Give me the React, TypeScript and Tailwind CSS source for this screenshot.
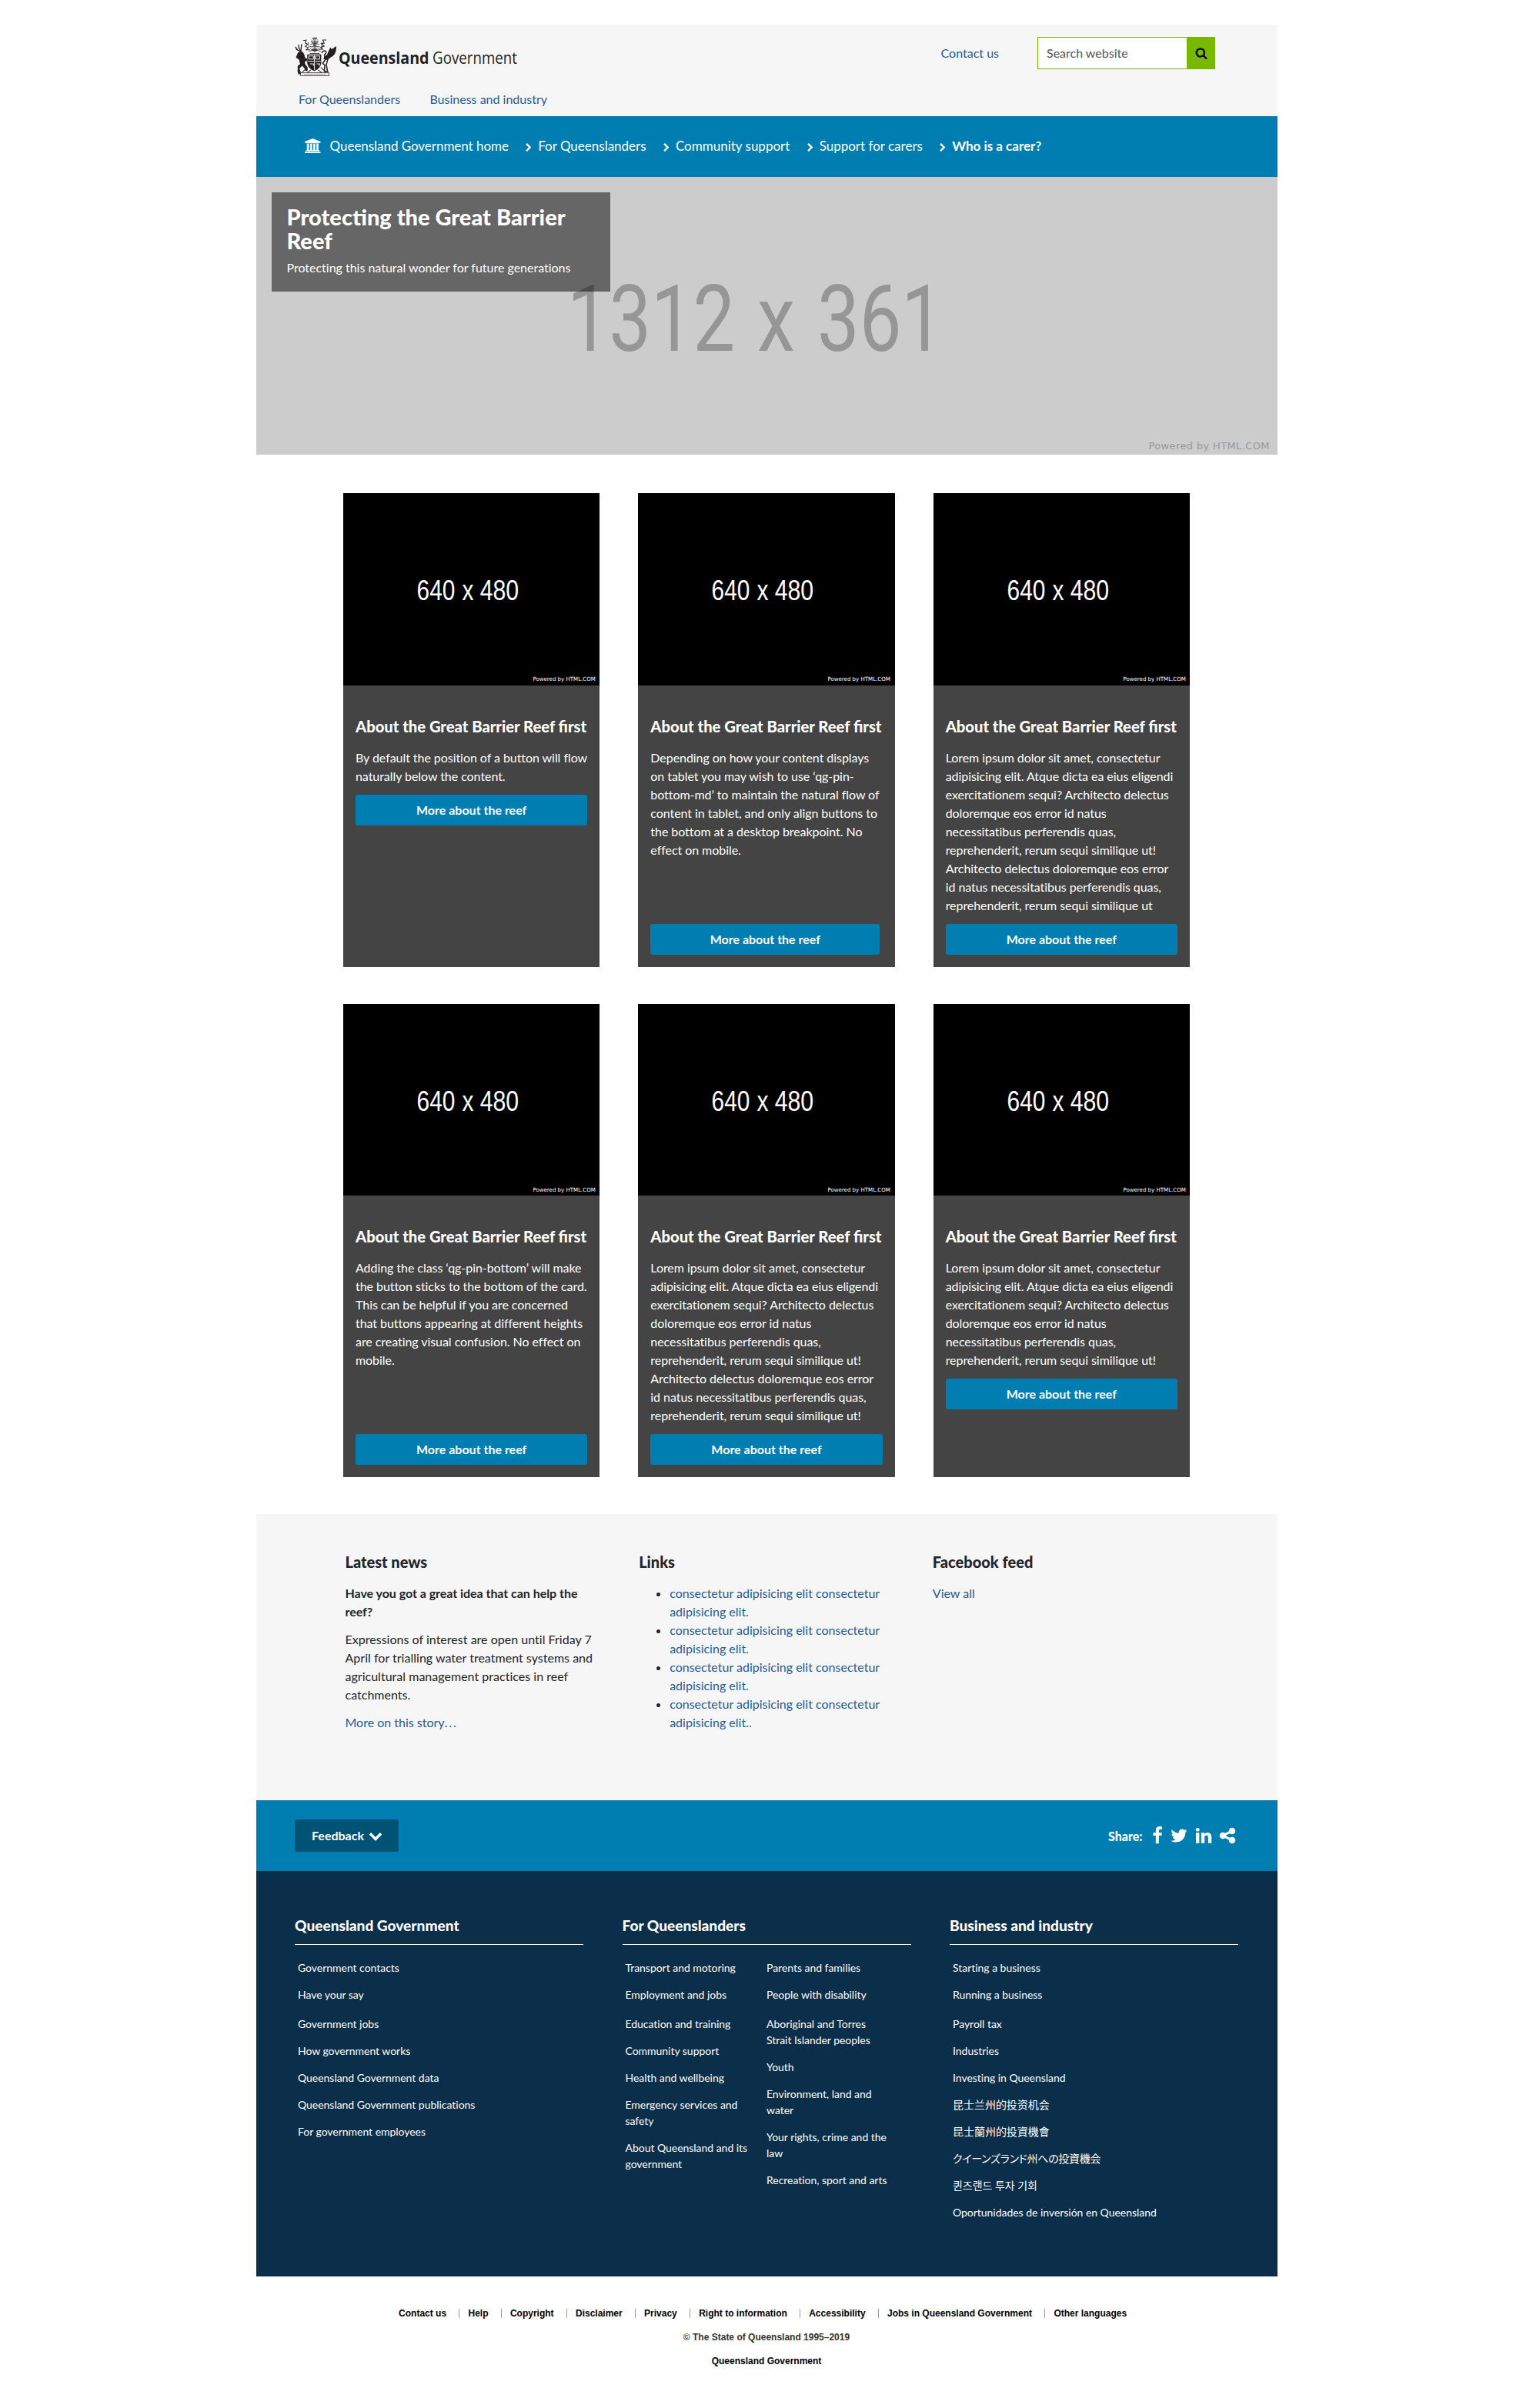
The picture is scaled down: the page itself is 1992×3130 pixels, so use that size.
import React from "react";

const LATO = "font-['Lato','Noto_Sans_CJK_SC',sans-serif]";

/* ---------- icons ---------- */

type IconProps = { className?: string; box?: string; d: string };

function Icon({ className = "", box = "0 0 1792 1792", d }: IconProps) {
  return (
    <svg viewBox={box} className={`shrink-0 ${className}`} fill="currentColor" aria-hidden="true">
      <path d={d} />
    </svg>
  );
}

const BANK =
  "M960 0l960 384v128h-128q0 26-20.5 45t-48.5 19h-1526q-28 0-48.5-19t-20.5-45h-128v-128zm-704 640h256v768h128v-768h256v768h128v-768h256v768h128v-768h256v768h59q28 0 48.5 19t20.5 45v64h-1664v-64q0-26 20.5-45t48.5-19h59v-768zm1595 960q28 0 48.5 19t20.5 45v128h-1920v-128q0-26 20.5-45t48.5-19h1782z";
const SEARCH =
  "M1216 832q0-185-131.5-316.5t-316.5-131.5-316.5 131.5-131.5 316.5 131.5 316.5 316.5 131.5 316.5-131.5 131.5-316.5zm512 832q0 52-38 90t-90 38q-54 0-90-38l-343-342q-179 124-399 124-143 0-273.5-55.5t-225-150-150-225-55.5-273.5 55.5-273.5 150-225 225-150 273.5-55.5 273.5 55.5 225 150 150 225 55.5 273.5q0 220-124 399l343 343q37 37 37 90z";
const FACEBOOK =
  "M1343 12v264h-157q-86 0-116 36t-30 108v189h293l-39 296h-254v759h-306v-759h-255v-296h255v-218q0-186 104-288.5t277-102.5q147 0 228 12z";
const TWITTER =
  "M1684 408q-67 98-162 167 1 14 1 42 0 130-38 259.5t-115.5 248.5-184.5 210.5-258 146-323 54.5q-271 0-496-145 35 4 78 4 225 0 401-138-105-2-188-64.5t-114-159.5q33 5 61 5 43 0 85-11-112-23-185.5-111.5t-73.5-205.5v-4q68 38 146 41-66-44-105-115t-39-154q0-88 44-163 121 149 294.5 238.5t371.5 99.5q-8-38-8-74 0-134 94.5-228.5t228.5-94.5q140 0 236 102 109-21 205-78-37 115-142 178 93-10 186-50z";
const LINKEDIN =
  "M477 625v991h-330v-991h330zm21-306q1 73-50.5 122t-135.5 49h-2q-82 0-132-49t-50-122q0-74 51.5-122.5t134.5-48.5 133 48.5 51 122.5zm1166 729v568h-329v-530q0-105-40.5-164.5t-126.5-59.5q-63 0-105.5 34.5t-63.5 85.5q-11 30-11 81v553h-329q2-399 2-647t-1-296l-1-48h329v144h-2q20-32 41-56t56.5-52 87-43.5 114.5-15.5q171 0 275 113.5t104 332.5z";
const SHARE =
  "M1344 1024q133 0 226.5 93.5t93.5 226.5-93.5 226.5-226.5 93.5-226.5-93.5-93.5-226.5q0-12 2-34l-360-180q-92 86-218 86-133 0-226.5-93.5t-93.5-226.5 93.5-226.5 226.5-93.5q126 0 218 86l360-180q-2-22-2-34 0-133 93.5-226.5t226.5-93.5 226.5 93.5 93.5 226.5-93.5 226.5-226.5 93.5q-126 0-218-86l-360 180q2 22 2 34t-2 34l360 180q92-86 218-86z";
const CHEVRON_RIGHT =
  "M1363 877l-742 742q-19 19-45 19t-45-19l-166-166q-19-19-19-45t19-45l531-531-531-531q-19-19-19-45t19-45l166-166q19-19 45-19t45 19l742 742q19 19 19 45t-19 45z";
const CHEVRON_DOWN =
  "M1683 808l-742 741q-19 19-45 19t-45-19l-742-741q-19-19-19-45.5t19-45.5l166-165q19-19 45-19t45 19l531 531 531-531q19-19 45-19t45 19l166 165q19 19 19 45.5t-19 45.5z";

/* Coat of arms: stag and brolga holding a quartered shield under a helm. */
function Crest() {
  return (
    <svg viewBox="0 0 160 152" className="h-[51px] w-[54px] shrink-0" fill="none" stroke="#231f20" strokeWidth="3">
      {/* helm, mantling and wreath */}
      <path d="M32 14l12-2-4 12 10 4-10 8 12 6-8 8h14M122 12l-14 0 6 12-12 2 12 10-14 4 8 8h-16" strokeWidth="3" />
      <path d="M66 10c4-6 16-8 22 0M62 16l30 0M64 22h26M60 30c8-6 26-6 34 0M58 38h38M60 46c8 6 24 6 32 0M54 56c12-6 34-6 46 0M58 64h38" strokeWidth="2.5" />
      <path d="M52 20c-2 8 4 12 2 20M104 20c4 8-2 12 0 22M70 2l4 10M84 2l-4 10M77 0v60" strokeWidth="2" />
      <path d="M70 26h14v10h-14zM68 44h18v12h-18z" fill="#231f20" stroke="none" opacity=".6" />
      {/* stag */}
      <path d="M2 38l8 12 12 8M14 30l2 14 8 14M26 28l-3 28M4 46l8 6" strokeWidth="4" />
      <path
        d="M12 60l16-4 8 10 4 16 8 2-2 10-8 2 2 10 8 10 2 14-8 2-6-12-8-8-10 10 4 20-8 4-4-14 2-16 8-12-4-16-12-8z"
        fill="#231f20"
        stroke="none"
      />
      <path d="M14 110c-2 12 0 20 8 28M36 106l10 26" strokeWidth="5" />
      {/* brolga */}
      <path
        d="M160 36c1 12-1 24-7 32-6 8-14 10-20 16-6 4-14 8-22 2 0-6 4-12 10-14 8-6 6-12 10-18 2-6 5-8 6-14l6 8z"
        fill="#231f20"
        stroke="none"
      />
      <path d="M124 80c-10 0-12-8-6-14 5-5 4-12-4-12-6 0-8 4-10 8M128 86l-6 20 4 26M118 88l-10 14 8 8-2 22M112 134h18" strokeWidth="4.5" />
      {/* shield */}
      <path d="M48 68h54v30c0 18-14 28-27 34-13-6-27-16-27-34z" fill="#231f20" stroke="none" />
      <path d="M54 74h18v12h-18zM80 74h16v12h-16zM52 94h22M80 94h20M58 104h14v8M84 104h12l-2 8M76 70v58" stroke="#f6f6f6" strokeWidth="3" />
      <path d="M60 80h6M86 80h6" strokeWidth="5" />
      {/* compartment and motto scroll */}
      <path d="M50 118c-8 6-14 14-22 18M100 118c8 6 14 14 22 18M62 128l-14 10M90 128l14 10" strokeWidth="3" />
      <path d="M22 139h110v11h-110z" fill="#f6f6f6" strokeWidth="2.5" />
      <path d="M36 145h84" strokeDasharray="3 2.5" strokeWidth="3" opacity=".6" />
    </svg>
  );
}

function Wordmark() {
  return (
    <svg viewBox="0 0 240 38" className="h-[38px] w-[240px] shrink-0" fill="#231f20" fontFamily="'Open Sans','Noto Sans',sans-serif" fontSize="22">
      <text x="1" y="26" fontWeight="700" textLength="117.5" lengthAdjust="spacingAndGlyphs">Queensland</text>
      <text x="123" y="26" textLength="110" lengthAdjust="spacingAndGlyphs">Government</text>
    </svg>
  );
}

/* ---------- header ---------- */

function Header() {
  return (
    <header className="flex h-[119px] flex-col bg-[#f6f6f6]">
      <div className="flex h-[66px] items-start pt-4 pl-[50px] pr-[81px]">
        <Crest />
        <div className="ml-[2.5px] mt-[8.5px]">
          <Wordmark />
        </div>
        <a className="ml-auto mt-[9px] mr-[49.5px] text-[#1f5c98]">Contact us</a>
        <form className="flex h-[42px] w-[231px]">
          <div className="flex-1 border border-[#79b800] bg-white pt-[8px] pl-[11.5px] text-[#555]">Search website</div>
          <button type="button" className="flex w-9 items-center justify-center bg-[#79b800] text-black">
            <Icon d={SEARCH} className="size-4" />
          </button>
        </form>
      </div>
      <nav className="mt-[19px] flex gap-[38.3px] pl-[55.5px] text-[#1f5c98]">
        <a>For Queenslanders</a>
        <a>Business and industry</a>
      </nav>
    </header>
  );
}

function Breadcrumbs() {
  const crumbs = ["For Queenslanders", "Community support", "Support for carers"];
  return (
    <nav className="flex h-[79px] items-start bg-[#007eb1] pt-[26.5px] pl-[63.5px] text-[17px] leading-6 text-white">
      <Icon d={BANK} box="0 0 1920 1792" className="mt-[2px] h-[19.2px] w-[20.6px]" />
      <a className="ml-3 tracking-[-0.04px]">Queensland Government home</a>
      {crumbs.map((c) => (
        <span key={c} className="flex">
          <Icon d={CHEVRON_RIGHT} className="mt-[8px] ml-[20.3px] size-3" />
          <a className="ml-[6px]">{c}</a>
        </span>
      ))}
      <span className="flex">
        <Icon d={CHEVRON_RIGHT} className="mt-[8px] ml-[20.3px] size-3" />
        <b className="ml-[6px]">Who is a carer?</b>
      </span>
    </nav>
  );
}

function Hero() {
  return (
    <section className="relative h-[361px] bg-[#ccc]">
      <svg viewBox="0 0 1327 361" className="block h-[361px] w-[1327px]" fill="#969696">
        <g fontFamily="Roboto, sans-serif" fontSize="121">
          <text x="404" y="226" textLength="218" lengthAdjust="spacingAndGlyphs">1312</text>
          <text x="651" y="226" textLength="49" lengthAdjust="spacingAndGlyphs">x</text>
          <text x="729" y="226" textLength="164" lengthAdjust="spacingAndGlyphs">361</text>
        </g>
        <text x="1159.5" y="353.5" fontFamily="'DejaVu Sans', sans-serif" fontSize="13" fill="#999" textLength="157" lengthAdjust="spacing">
          Powered by HTML.COM
        </text>
      </svg>
      <div className="absolute top-5 left-5 h-[129px] w-[440px] bg-black/50 px-5 pt-4 text-white">
        <h1 className="text-[29px] leading-[31px] font-black">Protecting the Great Barrier Reef</h1>
        <p className="mt-2 tracking-[-0.01px]">Protecting this natural wonder for future generations</p>
      </div>
    </section>
  );
}

/* ---------- cards ---------- */

const LOREM =
  "Lorem ipsum dolor sit amet, consectetur adipisicing elit. Atque dicta ea eius eligendi exercitationem sequi? Architecto delectus doloremque eos error id natus necessitatibus perferendis quas, reprehenderit, rerum sequi similique ut!";
const LOREM_MORE =
  " Architecto delectus doloremque eos error id natus necessitatibus perferendis quas, reprehenderit, rerum sequi similique ut";

type CardData = { text: string; pin?: boolean; narrow?: boolean };

const CARDS: CardData[] = [
  { text: "By default the position of a button will flow naturally below the content." },
  {
    text: "Depending on how your content displays on tablet you may wish to use ‘qg-pin-bottom-md’ to maintain the natural flow of content in tablet, and only align buttons to the bottom at a desktop breakpoint. No effect on mobile.",
    pin: true,
    narrow: true,
  },
  { text: LOREM + LOREM_MORE },
  {
    text: "Adding the class ‘qg-pin-bottom’ will make the button sticks to the bottom of the card. This can be helpful if you are concerned that buttons appearing at different heights are creating visual confusion. No effect on mobile.",
    pin: true,
  },
  { text: LOREM + LOREM_MORE + "!" },
  { text: LOREM },
];

function Card({ text, pin, narrow }: CardData) {
  return (
    <article className="flex flex-col bg-[#444] text-white">
      <svg viewBox="0 0 333.33 250" className="block h-[249.75px] w-full bg-black" fill="#fff">
        <g fontFamily="'Liberation Sans', Arial, sans-serif" fontSize="37">
          <text x="95.5" y="139" textLength="49.8" lengthAdjust="spacingAndGlyphs">640</text>
          <text x="154.5" y="139" textLength="15" lengthAdjust="spacingAndGlyphs">x</text>
          <text x="177.7" y="139" textLength="50.5" lengthAdjust="spacingAndGlyphs">480</text>
        </g>
        <text x="246.5" y="244.7" fontFamily="'DejaVu Sans', sans-serif" fontSize="7.1" textLength="81.5" lengthAdjust="spacingAndGlyphs">
          Powered by HTML.COM
        </text>
      </svg>
      <div className="flex flex-1 flex-col px-4 pt-[41px] pb-4">
        <h3 className="text-[20.2px] leading-6 font-black whitespace-nowrap">About the Great Barrier Reef first</h3>
        <p className="mt-[17px] -mr-[3px] mb-3 tracking-[-0.055px]">{text}</p>
        <a
          className={`block h-10 rounded-[3px] bg-[#007eb1] pt-2 text-center font-bold ${pin ? "mt-auto" : ""} ${narrow ? "w-[298px]" : ""}`}
        >
          More about the reef
        </a>
      </div>
    </article>
  );
}

/* ---------- lower panels ---------- */

function NewsPanel() {
  const links = ["elit.", "elit.", "elit.", "elit.."];
  return (
    <section className="mt-[47.7px] flex h-[372px] bg-[#f6f6f6] pt-[50px] pl-[116px] text-[#212529]">
      <div className="w-[381.67px] pr-[51px]">
        <h2 className="text-xl leading-6 font-black">Latest news</h2>
        <p className="mt-[17px] font-bold tracking-[-0.04px]">Have you got a great idea that can help the reef?</p>
        <p className="mt-3 tracking-[0.02px]">
          Expressions of interest are open until Friday 7 April for trialling water treatment systems and agricultural management practices in reef
          catchments.
        </p>
        <p className="mt-3 text-[#1f5c98]">
          More on this story<span className="tracking-[-1px]">. . .</span>
        </p>
      </div>
      <div className="w-[381.67px] pr-[51px]">
        <h2 className="text-xl leading-6 font-black">Links</h2>
        <ul className="mt-[17px] list-disc pl-10">
          {links.map((end, i) => (
            <li key={i}>
              <a className="text-[#1f5c98]">consectetur adipisicing elit consectetur adipisicing {end}</a>
            </li>
          ))}
        </ul>
      </div>
      <div>
        <h2 className="text-xl leading-6 font-black">Facebook feed</h2>
        <a className="mt-[17px] block text-[#1f5c98]">View all</a>
      </div>
    </section>
  );
}

function ShareBar() {
  return (
    <section className="flex h-[92px] items-start bg-[#007eb1] pl-[50.5px] text-white">
      <button type="button" className="mt-[25px] flex h-[42px] w-[135px] items-start rounded-[3px] bg-[#005375] pt-[9px] pl-[22px] font-bold">
        Feedback
        <Icon d={CHEVRON_DOWN} className="mt-[3.5px] ml-[6px] size-[18px]" />
      </button>
      <span className="mt-[35.5px] ml-auto font-black">Share:</span>
      <div className="mt-[34px] mr-[52.5px] flex">
        <Icon d={FACEBOOK} className="ml-[7.5px] size-6" />
        <Icon d={TWITTER} className="ml-[4px] size-6" />
        <Icon d={LINKEDIN} className="ml-[8px] size-6" />
        <Icon d={SHARE} className="ml-[7px] size-6" />
      </div>
    </section>
  );
}

function FooterLinks({ items, width = "w-[300px]" }: { items: React.ReactNode[]; width?: string }) {
  return (
    <ul className={`flex flex-col gap-[14px] ${width}`}>
      {items.map((it, i) => (
        <li key={i} className={i === 2 ? "pt-[3px]" : ""}>
          {it}
        </li>
      ))}
    </ul>
  );
}

function FooterColumn({ title, children }: { title: string; children: React.ReactNode }) {
  return (
    <div className="w-[375px]">
      <h2 className="border-b border-white pb-3 text-[19.1px] leading-6 font-black">{title}</h2>
      <div className="mt-[19px] flex gap-[21.5px] pl-[4px] text-sm leading-[21px] tracking-[-0.03px]">{children}</div>
    </div>
  );
}

function Footer() {
  return (
    <footer className="flex h-[527px] gap-[50.5px] bg-[#0b2e4a] pt-[59px] pl-[50.5px] text-white">
      <FooterColumn title="Queensland Government">
        <FooterLinks
          items={[
            "Government contacts",
            "Have your say",
            "Government jobs",
            "How government works",
            "Queensland Government data",
            "Queensland Government publications",
            "For government employees",
          ]}
        />
      </FooterColumn>
      <FooterColumn title="For Queenslanders">
        <FooterLinks
          width="w-[162px]"
          items={[
            "Transport and motoring",
            "Employment and jobs",
            "Education and training",
            "Community support",
            "Health and wellbeing",
            "Emergency services and safety",
            "About Queensland and its government",
          ]}
        />
        <FooterLinks
          width="w-[162px]"
          items={[
            "Parents and families",
            "People with disability",
            "Aboriginal and Torres Strait Islander peoples",
            "Youth",
            "Environment, land and water",
            "Your rights, crime and the law",
            "Recreation, sport and arts",
          ]}
        />
      </FooterColumn>
      <FooterColumn title="Business and industry">
        <FooterLinks
          items={[
            "Starting a business",
            "Running a business",
            "Payroll tax",
            "Industries",
            "Investing in Queensland",
            <span lang="zh-Hans" className="block h-[21px] font-['Lato','Noto_Sans_CJK_SC',sans-serif]">昆士兰州的投资机会</span>,
            <span lang="zh-Hant" className="block h-[21px] font-['Lato','Noto_Sans_CJK_TC',sans-serif]">昆士蘭州的投資機會</span>,
            <span lang="ja" className="block h-[21px] font-['Lato','Noto_Sans_CJK_JP',sans-serif] tracking-[-0.28px] [font-feature-settings:'palt']">
              クイーンズランド州への投資機会
            </span>,
            <span lang="ko" className="block h-[21px] font-['Lato','Noto_Sans_CJK_KR',sans-serif]">퀸즈랜드 투자 기회</span>,
            "Oportunidades de inversión en Queensland",
          ]}
        />
      </FooterColumn>
    </footer>
  );
}

function Legal() {
  const items = [
    "Contact us",
    "Help",
    "Copyright",
    "Disclaimer",
    "Privacy",
    "Right to information",
    "Accessibility",
    "Jobs in Queensland Government",
    "Other languages",
  ];
  return (
    <section className="pt-[42px] font-['Liberation_Sans',Arial,sans-serif] text-xs leading-3 font-bold text-black">
      <ul className="flex pl-[185.6px]">
        {items.map((t, i) => (
          <li key={t} className={i < items.length - 1 ? "mr-[11.4px] border-r border-[#999] pr-4" : ""}>
            {t}
          </li>
        ))}
      </ul>
      <p className="mt-[19px] text-center text-[#333]">© The State of Queensland 1995–2019</p>
      <p className="mt-[19px] text-center">Queensland Government</p>
    </section>
  );
}

export default function App() {
  return (
    <div className={`min-h-[3130px] bg-white pt-8 text-base leading-6 ${LATO}`}>
      <div className="mx-auto w-[1327px]">
        <Header />
        <Breadcrumbs />
        <Hero />
        <main className="mx-auto mt-[50px] grid w-[1100px] grid-cols-3 gap-x-[50px] gap-y-[47.8px]">
          {CARDS.map((c, i) => (
            <Card key={i} {...c} />
          ))}
        </main>
        <NewsPanel />
        <ShareBar />
        <Footer />
        <Legal />
      </div>
    </div>
  );
}
